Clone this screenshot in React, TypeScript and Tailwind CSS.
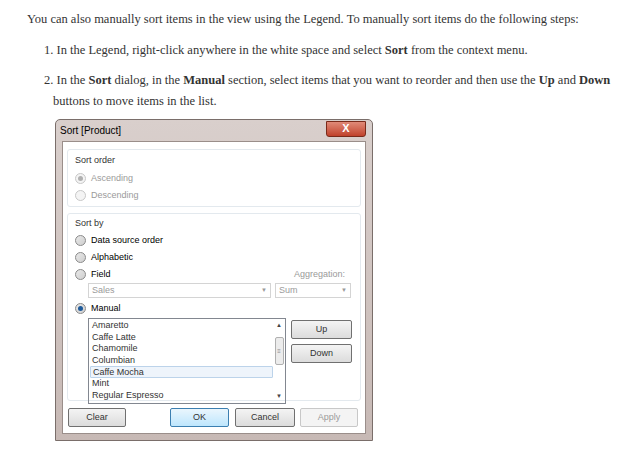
import React from "react";

const Radio = ({ on, dis }: { on?: boolean; dis?: boolean }) => (
  <span className={`inline-block w-[11px] h-[11px] rounded-full border ${dis ? "border-[#c8c8c8] bg-[#f4f4f4]" : "border-[#8a8a8a] bg-gradient-to-br from-[#e8e8e8] to-[#cfcfcf]"} relative mr-[5px]`}>
    {on && <span className={`absolute left-[2px] top-[2px] w-[5px] h-[5px] rounded-full ${dis ? "bg-[#b0b0b0]" : "bg-[#1e5a9a]"}`} />}
  </span>
);

const Row = ({ label, on, dis }: { label: string; on?: boolean; dis?: boolean }) => (
  <div className={`flex items-center h-[17px] ${dis ? "text-[#9a9a9a]" : "text-black"}`}>
    <Radio on={on} dis={dis} />
    {label}
  </div>
);

const Btn = ({ children, w, cls = "" }: { children: React.ReactNode; w: string; cls?: string }) => (
  <div className={`${w} h-[19px] flex items-center justify-center rounded-[2px] border ${cls}`}>{children}</div>
);

export default function App() {
  const items = ["Amaretto", "Caffe Latte", "Chamomile", "Columbian", "Caffe Mocha", "Mint", "Regular Espresso"];
  return (
    <div className="w-[636px] h-[470px] bg-white text-[#333] overflow-hidden" style={{ fontFamily: '"Liberation Serif", serif' }}>
      <div className="pt-[11px] pl-[27px] text-[12.5px] leading-[16px] whitespace-nowrap">
        You can also manually sort items in the view using the Legend. To manually sort items do the following steps:
      </div>
      <div className="pl-[44px] pt-[15px] text-[12.5px] leading-[16px] whitespace-nowrap">
        <div>1. In the Legend, right-click anywhere in the white space and select <b>Sort</b> from the context menu.</div>
        <div className="mt-[14px]">2. In the <b>Sort</b> dialog, in the <b>Manual</b> section, select items that you want to reorder and then use the <b>Up</b> and <b>Down</b></div>
        <div className="mt-[5px] pl-[9px]">buttons to move items in the list.</div>
      </div>
      <div className="ml-[55px] mt-[10px] w-[318px] h-[322px] rounded-t-[5px] border border-[#7a6e6a] bg-gradient-to-b from-[#d9cfcc] to-[#c7b9b5] flex flex-col px-[6px] pb-[6px] text-[9px]" style={{ fontFamily: '"Liberation Sans", sans-serif' }}>
        <div className="h-[21px] flex items-center justify-between shrink-0">
          <span className="text-[10px] text-black -ml-[2px]">Sort [Product]</span>
          <div className="w-[40px] h-[16px] -mt-[4px] rounded-b-[3px] bg-gradient-to-b from-[#e08a78] to-[#c0402a] border border-[#7a2a1a] text-white font-bold text-[11px] flex items-center justify-center">X</div>
        </div>
        <div className="flex-1 bg-white border border-[#9a8e8a] px-[4px] pt-[7px]">
          <div className="border border-[#e3e9ee] rounded-[3px] px-[7px] pt-[2px] pb-[4px] h-[58px]">
            <div className="h-[18px] flex items-center">Sort order</div>
            <Row label="Ascending" on dis />
            <Row label="Descending" dis />
          </div>
          <div className="mt-[6px] border border-[#e3e9ee] rounded-[3px] px-[7px] pt-[2px] h-[188px]">
            <div className="h-[16px] flex items-center">Sort by</div>
            <Row label="Data source order" />
            <Row label="Alphabetic" />
            <div className="flex items-center justify-between">
              <Row label="Field" />
              <span className="text-[#9a9a9a] mr-[8px]">Aggregation:</span>
            </div>
            <div className="flex gap-[4px] ml-[13px] h-[15px] text-[#9a9a9a]">
              <div className="w-[183px] border border-[#d4d4d4] flex items-center justify-between px-[3px]"><span>Sales</span><span className="text-[6px]">▼</span></div>
              <div className="w-[76px] border border-[#d4d4d4] flex items-center justify-between px-[3px]"><span>Sum</span><span className="text-[6px]">▼</span></div>
            </div>
            <div className="mt-[2px]"><Row label="Manual" on /></div>
            <div className="flex ml-[13px] mt-[1px] gap-[5px]">
              <div className="w-[198px] h-[86px] border border-[#828790] flex overflow-hidden">
                <div className="flex-1 pl-[1px] pt-[1px]">
                  {items.map((t) => (
                    <div key={t} className={`h-[11.6px] leading-[11.6px] px-[2px] ${t === "Caffe Mocha" ? "bg-[#eef4fb] border border-[#bcd3ea] rounded-[1px]" : ""}`}>{t}</div>
                  ))}
                </div>
                <div className="w-[12px] flex flex-col items-center justify-between py-[2px] text-[6px] text-[#444]">
                  <span>▲</span>
                  <div className="w-[9px] h-[28px] -mt-[20px] border border-[#b0b0b0] rounded-[2px] bg-[#ececec] flex items-center justify-center text-[6px] text-[#888]">≡</div>
                  <span>▼</span>
                </div>
              </div>
              <div className="flex flex-col gap-[5px] pt-[2px]">
                <Btn w="w-[61px]" cls="border-[#707070] bg-gradient-to-b from-[#f4f4f4] to-[#dcdcdc]">Up</Btn>
                <Btn w="w-[61px]" cls="border-[#707070] bg-gradient-to-b from-[#f4f4f4] to-[#dcdcdc]">Down</Btn>
              </div>
            </div>
          </div>
          <div className="flex mt-[7px] ml-[1px]">
            <Btn w="w-[58px]" cls="border-[#707070] bg-gradient-to-b from-[#f4f4f4] to-[#dcdcdc]">Clear</Btn>
            <Btn w="w-[59px] ml-[44px]" cls="border-[#3c7fb1] bg-gradient-to-b from-[#eaf6fd] to-[#bee6fd]">OK</Btn>
            <Btn w="w-[60px] ml-[6px]" cls="border-[#707070] bg-gradient-to-b from-[#f4f4f4] to-[#dcdcdc]">Cancel</Btn>
            <Btn w="w-[58px] ml-[5px]" cls="border-[#c8c8c8] bg-[#f4f4f4] text-[#9a9a9a]">Apply</Btn>
          </div>
        </div>
      </div>
    </div>
  );
}
